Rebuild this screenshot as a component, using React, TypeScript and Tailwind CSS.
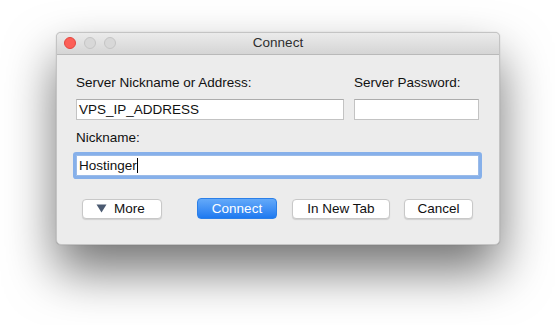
export default function App() {
  return (
    <div
      className="w-[555px] h-[325px] bg-white overflow-hidden pt-[32px] pl-[56px]"
      style={{ fontFamily: '"Liberation Sans", Arial, sans-serif' }}
    >
      {/* Window */}
      <div className="w-[444px] h-[213px] rounded-[5px] border border-[#c4c4c4] bg-[#ececec] shadow-[0_26px_50px_rgba(0,0,0,0.55),0_0_1px_rgba(0,0,0,0.3)] flex flex-col overflow-hidden">
        {/* Title bar */}
        <div className="relative h-[22px] shrink-0 bg-gradient-to-b from-[#ebebeb] to-[#d5d5d5] border-b border-[#b9b9b9] flex items-center justify-center">
          <div className="absolute left-[7px] top-[4px] flex gap-[8px]">
            <span className="w-[12px] h-[12px] rounded-full bg-[#fc5f57] border border-[#e2463f]" />
            <span className="w-[12px] h-[12px] rounded-full bg-[#d8d8d8] border border-[#c4c4c4]" />
            <span className="w-[12px] h-[12px] rounded-full bg-[#d8d8d8] border border-[#c4c4c4]" />
          </div>
          <span className="text-[13.5px] text-[#2e2e2e]">Connect</span>
        </div>

        {/* Body */}
        <div className="flex flex-col pt-[20px] pl-[19px] pr-[20px] text-[13.5px] text-[#111]">
          <div className="flex gap-[10px]">
            <div className="w-[268px] flex flex-col">
              <label className="leading-[16px] mb-[8px]">Server Nickname or Address:</label>
              <div className="h-[21px] bg-white border border-[#c3c3c3] border-t-[#acacac] flex items-center px-[2px] leading-none">
                VPS_IP_ADDRESS
              </div>
            </div>
            <div className="w-[125px] flex flex-col">
              <label className="leading-[16px] mb-[8px]">Server Password:</label>
              <div className="h-[21px] bg-white border border-[#c3c3c3] border-t-[#acacac]" />
            </div>
          </div>

          <label className="leading-[16px] mt-[10px] mb-[9px]">Nickname:</label>
          <div className="w-[403px] h-[21px] bg-white border border-[#9bbbe8] rounded-[1px] shadow-[0_0_0_3px_#86b0ea] flex items-center px-[2px] leading-none">
            Hostinger
            <span className="inline-block w-px h-[15px] bg-black" />
          </div>

          {/* Buttons */}
          <div className="flex items-center mt-[22px] pl-[6px]">
            <button className="w-[80px] h-[20px] bg-white border border-[#c8c8c8] rounded-[4px] shadow-[0_1px_1px_rgba(0,0,0,0.12)] flex items-center pl-[13px] gap-[7px] text-[13.5px] text-[#111] leading-none">
              <svg width="11" height="9" viewBox="0 0 11 9">
                <path d="M0.5 0.5 L10.5 0.5 L5.5 8.5 Z" fill="#4b5a71" />
              </svg>
              More
            </button>
            <button className="ml-[35px] w-[80px] h-[21px] rounded-[4px] bg-gradient-to-b from-[#63a9f9] to-[#1c79f0] border border-[#2b7fe8] text-white text-[13.5px] leading-none flex items-center justify-center">
              Connect
            </button>
            <button className="ml-[15px] w-[98px] h-[20px] bg-white border border-[#c8c8c8] rounded-[4px] shadow-[0_1px_1px_rgba(0,0,0,0.12)] text-[13.5px] text-[#111] leading-none flex items-center justify-center">
              In New Tab
            </button>
            <button className="ml-[14px] w-[69px] h-[20px] bg-white border border-[#c8c8c8] rounded-[4px] shadow-[0_1px_1px_rgba(0,0,0,0.12)] text-[13.5px] text-[#111] leading-none flex items-center justify-center">
              Cancel
            </button>
          </div>
        </div>
      </div>
    </div>
  )
}
